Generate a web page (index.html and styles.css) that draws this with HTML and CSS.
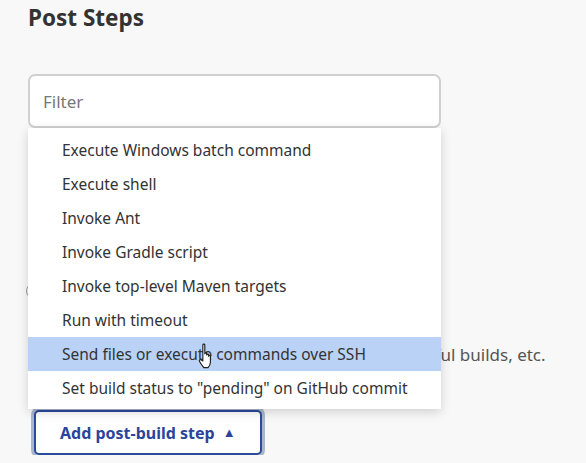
FILE: index.html
```html
<!DOCTYPE html>
<html lang="en">
<head>
<meta charset="utf-8">
<title>Post Steps</title>
<link rel="stylesheet" href="styles.css">
</head>
<body>
<div class="page">
  <h2 class="title">Post Steps</h2>
  <div class="picker">
    <input class="filter" type="text" placeholder="Filter">
    <ul class="menu">
      <li class="item">Execute Windows batch command</li>
      <li class="item">Execute shell</li>
      <li class="item">Invoke Ant</li>
      <li class="item">Invoke Gradle script</li>
      <li class="item">Invoke top-level Maven targets</li>
      <li class="item">Run with timeout</li>
      <li class="item active">Send files or execute commands over SSH
        <svg class="cursor" width="21" height="29" viewBox="0 0 18 24">
          <path d="M5 2.2c0-1 1.7-1 1.7 0v7.5c0-1 1.6-1 1.6 0v1c0-1 1.6-1 1.6 0v1c0-1 1.6-1 1.6 0v5.2c0 2.2-1 3.6-2 4.6H5.8c-1-1.3-2.6-3.4-3.6-5.2-.7-1.3.6-2.2 1.5-1.3L5 15.8z" fill="#fff" stroke="#222" stroke-width="1" stroke-linejoin="round"/>
        </svg>
      </li>
      <li class="item">Set build status to "pending" on GitHub commit</li>
    </ul>
  </div>
  <div class="condition">
    <label class="radio-row"><span class="radio"></span>Run only if build succeeds</label>
    <p class="desc">Should the post-build steps run only for successful builds, etc.</p>
  </div>
  <div class="actions">
    <button class="add" type="button">Add post-build step <span class="caret">&#9650;</span></button>
  </div>
</div>
</body>
</html>
```
FILE: styles.css
```css
html, body {
  margin: 0;
  padding: 0;
  background: #f8f8f8;
}
body {
  font-family: "Noto Sans", "Open Sans", sans-serif;
  color: #333;
}
.page {
  padding: 0 0 0 28px;
  width: 413px;
}
.title {
  margin: 0;
  padding-top: 3px;
  font-size: 22.5px;
  line-height: 30px;
  font-weight: 700;
  color: #333;
}
.picker {
  position: relative;
  margin-top: 41px;
}
.filter {
  display: block;
  box-sizing: border-box;
  width: 413px;
  height: 54px;
  margin: 0;
  padding: 0 13px;
  border: 2px solid #d0d0d0;
  border-radius: 7px;
  background: #fff;
  font-family: inherit;
  font-size: 17px;
  color: #333;
  outline: none;
}
.filter::placeholder {
  color: #777;
}
.menu {
  position: absolute;
  left: 0;
  top: 54px;
  width: 413px;
  box-sizing: border-box;
  margin: 0;
  padding: 5px 0 4px;
  list-style: none;
  background: #fff;
  box-shadow: 0 3px 10px rgba(0, 0, 0, 0.16);
  z-index: 2;
}
.item {
  position: relative;
  height: 34px;
  line-height: 34px;
  padding-left: 34px;
  font-size: 15.5px;
  color: #333;
  white-space: nowrap;
}
.item.active {
  background: #bad2f6;
}
.cursor {
  position: absolute;
  left: 169px;
  top: 5px;
}
.condition {
  padding-top: 151px;
}
.radio-row {
  display: flex;
  align-items: center;
  gap: 10px;
  height: 24px;
  font-size: 16px;
  color: #333;
}
.radio {
  width: 14px;
  height: 14px;
  border: 1px solid #999;
  border-radius: 50%;
  margin-left: -2px;
}
.desc {
  margin: 40px 0 0;
  padding-left: 25px;
  font-size: 17px;
  line-height: 24px;
  color: #555;
  white-space: nowrap;
}
.actions {
  padding-top: 43px;
}
.add {
  display: inline-flex;
  align-items: center;
  gap: 8px;
  box-sizing: border-box;
  height: 45px;
  margin-left: 6px;
  padding: 0 24px 0 24px;
  border: 2px solid #2c4a9a;
  border-radius: 5px;
  background: #fff;
  box-shadow: 0 0 0 3px #a9b6cc;
  font-family: inherit;
  font-size: 16px;
  font-weight: 700;
  color: #2b449c;
}
.caret {
  font-size: 13px;
  line-height: 1;
}
```
